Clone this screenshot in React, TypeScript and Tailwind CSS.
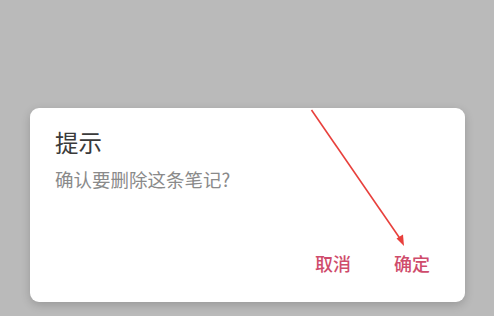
export default function App() {
    return (
        <div
            className="relative w-[494px] h-[316px] overflow-hidden bg-[#bababa]"
            style={{ fontFamily: '"Noto Sans CJK SC", "Noto Sans", sans-serif' }}
        >
            {/* Dialog */}
            <div className="ml-[30px] mt-[108px] w-[435px] h-[194px] bg-white rounded-[9px] shadow-[0_3px_10px_rgba(0,0,0,0.18)] flex flex-col pl-[25px] pr-[35px]">
                <h2 className="mt-[18px] text-[23.5px] leading-[32px] text-[#3a3a3a]">提示</h2>
                <p className="mt-[8px] text-[18.5px] leading-[26px] text-[#8a8a8a]">确认要删除这条笔记?</p>
                <div className="mt-auto mb-[27px] flex justify-end gap-[43px]">
                    <button className="text-[18px] leading-[24px] text-[#cf4c6c] font-medium">取消</button>
                    <button className="text-[18px] leading-[24px] text-[#cf4c6c] font-medium">确定</button>
                </div>
            </div>

            {/* Red annotation arrow */}
            <svg className="absolute left-0 top-0 pointer-events-none" width="494" height="316" viewBox="0 0 494 316">
                <line x1="311.5" y1="110" x2="401" y2="240" stroke="#e8403c" strokeWidth="1.6" />
                <polygon points="404,246 396.5,238.5 403,234.5" fill="#e8403c" />
            </svg>
        </div>
    );
}
